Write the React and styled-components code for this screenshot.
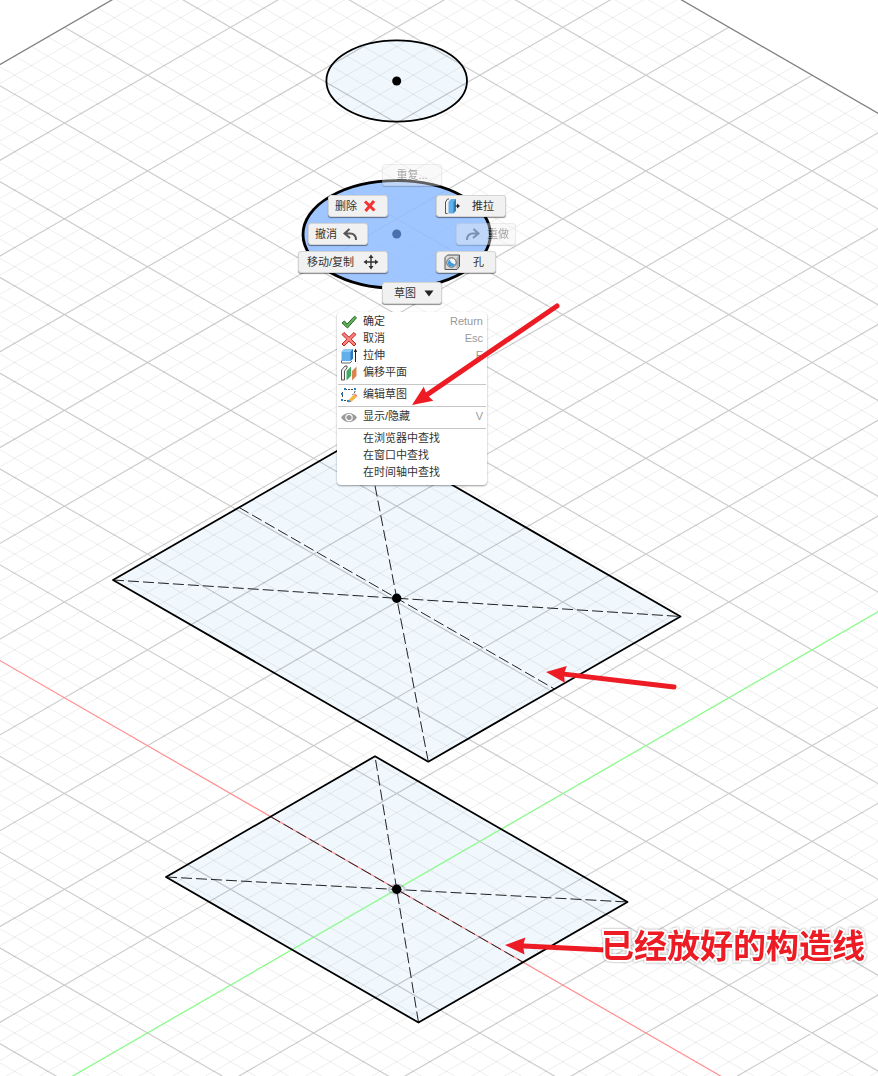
import React from 'react';
import styled, { createGlobalStyle } from 'styled-components';

const GlobalStyle = createGlobalStyle`
  * { box-sizing: border-box; }
  body {
    margin: 0;
    background: #fff;
    font-family: "Liberation Sans", "Noto Sans CJK SC", sans-serif;
    font-size: 11px;
    color: #333;
  }
  button { font: inherit; color: inherit; cursor: pointer; }
`;

const Workspace = styled.main`
  position: relative;
  width: 100%;
  height: 100vh;
  min-height: 560px;
  overflow: hidden;
`;

const Viewport = styled.svg`
  display: block;
  width: 100%;
  height: 100%;
`;

const Markup = styled(Viewport)`
  position: absolute;
  inset: 0;
  pointer-events: none;
`;

const buttonPadding = {
  trailingIcon: '0 9px 0 6px',
  leadingIcon: '0 11px 0 7px',
  wide: '0 8px',
  redo: '0 6px 0 8px',
  caret: '0 7px 0 11px',
  plain: '0',
};

const RadialButton = styled.button`
  position: absolute;
  left: ${(p) => p.$x}px;
  top: ${(p) => p.$y}px;
  width: ${(p) => p.$w || 60}px;
  height: 22px;
  padding: ${(p) => buttonPadding[p.$kind]};
  display: flex;
  align-items: center;
  justify-content: ${(p) => (p.$kind === 'plain' ? 'center' : 'space-between')};
  background: #f1f1f1;
  border: 1px solid #d4d4d4;
  border-radius: 3px;
  box-shadow: 0 1px 1px rgba(0, 0, 0, 0.45);
  line-height: 16px;
  white-space: nowrap;
  &:disabled {
    color: #222;
    opacity: 0.4;
    cursor: default;
  }
`;

const ContextMenu = styled.ul`
  position: absolute;
  left: 337px;
  top: 312px;
  width: 150px;
  margin: 0;
  padding: 1px 0 4px;
  list-style: none;
  background: #fff;
  border-radius: 4px;
  box-shadow: 0 1px 2px rgba(0, 0, 0, 0.4);
`;

const MenuButton = styled.button`
  display: grid;
  grid-template-columns: 18px 1fr auto;
  column-gap: 4px;
  align-items: center;
  width: 100%;
  height: 17px;
  padding: 0 4px;
  border: 0;
  background: none;
  text-align: left;
  line-height: 17px;
  white-space: nowrap;
`;

const Shortcut = styled.span`
  color: #999;
`;

const Separator = styled.li`
  height: 5px;
  padding-top: 3px;
  &::before {
    content: "";
    display: block;
    height: 1px;
    margin: 0 1px;
    background: #c6c6c6;
  }
`;

const Callout = styled.p`
  position: absolute;
  left: 601px;
  top: 920px;
  margin: 0;
  font-family: "Noto Sans CJK SC", sans-serif;
  font-size: 33px;
  font-weight: 700;
  line-height: 48px;
  white-space: nowrap;
  color: #ed1c24;
  -webkit-text-stroke: 4px #fff;
  paint-order: stroke fill;
  filter: drop-shadow(0 0 1px rgba(0, 0, 0, 0.4));
`;

const IconSvg = styled.svg`
  display: block;
  flex: none;
  overflow: visible;
`;

const Icon = ({ children, w = 16 }) => (
  <IconSvg width={w} height="16" viewBox={`0 0 ${w} 16`} fill="none" aria-hidden="true">
    {children}
  </IconSvg>
);

const icons = {
  delete: (
    <Icon>
      <path d="M3 3.500 L12.500 12.500 M12 3 L3.500 13" stroke="#f23232" strokeWidth="3" />
    </Icon>
  ),
  undo: (
    <Icon>
      <path d="M7.500 3 L2.500 7.500 L8 12 M3.500 7.500 H8 C12 7.500 14 10 14 14" stroke="#555" strokeWidth="2" />
    </Icon>
  ),
  redo: (
    <Icon>
      <path d="M8.500 3 L13.500 7.500 L8 12 M12.500 7.500 H8 C4 7.500 2 10 2 14" stroke="#444" strokeWidth="2" />
    </Icon>
  ),
  move: (
    <Icon>
      <path d="M8 2 V14 M2 8 H14" stroke="#333" strokeWidth="1.4" />
      <path d="M8 0.500 L10.500 4 H5.500 Z M8 15.500 L5.500 12 H10.500 Z M0.500 8 L4 5.500 V10.500 Z M15.500 8 L12 10.500 V5.500 Z" fill="#333" />
    </Icon>
  ),
  caret: (
    <Icon w={10}>
      <path d="M0.500 5.500 H9.500 L5 11.500 Z" fill="#222" />
    </Icon>
  ),
  press: (
    <Icon>
      <path d="M5 1 H3.500 L1.500 4 V15.500 H3.500" stroke="#555" />
      <path d="M4.500 4 L7 1 H12 V12.500 L9.500 15.500 H4.500 Z" fill="#62b0ea" />
      <path d="M9.500 4 L12 1 V12.500 L9.500 15.500 Z" fill="#2c7cb8" />
      <path d="M11.500 8 H14.500" stroke="#222" strokeWidth="1.200" />
      <path d="M13 5.500 L16 8 L13 10.500 Z" fill="#222" />
    </Icon>
  ),
  hole: (
    <Icon>
      <path d="M1 3.500 L3.500 1 H15.500 V12.500 L13 15.500 H1 Z" fill="#d9d9d9" stroke="#555" />
      <path d="M12.500 4 L15 1.500 V12.500 L12.500 15 Z" fill="#aaa" />
      <circle cx="7.500" cy="8.500" r="4.700" fill="#f7f7f7" stroke="#555" />
      <path d="M6 5.500 A4.500 4.500 0 0 0 11 10 A3.700 3.700 0 1 1 6 5.500 Z" fill="#3f9be0" />
    </Icon>
  ),
  check: (
    <Icon>
      <path d="M1 9 L3.500 7 L6 10.200 L13.500 2.200 L15.500 3.800 L6.500 14 Z" fill="#65b05a" stroke="#236b27" />
    </Icon>
  ),
  cancel: (
    <Icon>
      <path d="M3 1.500 L8 6.200 L13 1.500 L15 3.500 L10.200 8.200 L15 13 L13 15 L8 10.200 L3 15 L1 13 L5.800 8.200 L1 3.500 Z" fill="#f4847c" stroke="#c5221f" />
    </Icon>
  ),
  extrude: (
    <Icon>
      <path d="M0.500 12.500 V15 H9 L11 13" stroke="#666" />
      <path d="M0.500 4 L3 1 H12 V10.500 L9.500 13 H0.500 Z" fill="#62aeea" />
      <path d="M0.500 4 L3 1 H12 L9.500 4 Z" fill="#8bc8f5" />
      <path d="M9.500 4 L12 1 V10.500 L9.500 13 Z" fill="#2c78b8" />
      <path d="M14.500 14 V3" stroke="#222" />
      <path d="M14.500 0.500 L16.200 4 H12.800 Z" fill="#222" />
    </Icon>
  ),
  offset: (
    <Icon>
      <path d="M0.500 15 V5 L4 1 H6 V3 L3.500 6 V15 Z" fill="#f2f2f2" stroke="#555" />
      <path d="M5.500 6 L10 1.500 V11 L5.500 15.500 Z" fill="#41ab65" />
      <path d="M11 6 L15.500 1.500 V11 L11 15.500 Z" fill="#d98652" />
    </Icon>
  ),
  sketch: (
    <Icon>
      <path d="M4 2.500 H12 M1.500 5 V11 M3 13.500 H7 M14 4 C14 6 12 7 11.500 8" stroke="#444" strokeDasharray="2 1" />
      <path d="M3 1 h2 v2 h-2 Z M13 1 h2 v2 h-2 Z M0 6 h2 v2 h-2 Z M0 12 h2 v2 h-2 Z M6 13 h2 v2 h-2 Z" fill="#1687d9" />
      <path d="M8 12.500 L13 7.500 L15.500 10 L10.500 14.800 Z" fill="#f6b73c" />
      <path d="M13 7.500 L14 6.500 L16.500 9 L15.500 10 Z" fill="#ea7b83" />
      <path d="M8 12.500 L7.500 15.500 L10.500 14.800 Z" fill="#888" />
    </Icon>
  ),
  eye: (
    <Icon>
      <path d="M0 8.500 C4 2.500 12 2.500 16 8.500 C12 14.500 4 14.500 0 8.500 Z" fill="#999" />
      <circle cx="8" cy="8.500" r="3.200" stroke="#fff" strokeWidth="1.200" />
    </Icon>
  ),
};

const radialItems = [
  { label: '重复...', x: 382, y: 164, kind: 'plain', disabled: true },
  { label: '删除', x: 328, y: 195, kind: 'trailingIcon', icon: 'delete' },
  { label: '推拉', x: 436, y: 195, w: 70, kind: 'leadingIcon', icon: 'press' },
  { label: '撤消', x: 308, y: 223, kind: 'trailingIcon', icon: 'undo' },
  { label: '重做', x: 456, y: 223, kind: 'redo', icon: 'redo', disabled: true },
  { label: '移动/复制', x: 298, y: 251, w: 90, kind: 'wide', icon: 'move' },
  { label: '孔', x: 436, y: 251, kind: 'leadingIcon', icon: 'hole' },
  { label: '草图', x: 382, y: 282, kind: 'caret', icon: 'caret' },
];

const menuItems = [
  { label: '确定', icon: 'check', shortcut: 'Return' },
  { label: '取消', icon: 'cancel', shortcut: 'Esc' },
  { label: '拉伸', icon: 'extrude', shortcut: 'E' },
  { label: '偏移平面', icon: 'offset' },
  null,
  { label: '编辑草图', icon: 'sketch' },
  null,
  { label: '显示/隐藏', icon: 'eye', shortcut: 'V' },
  null,
  { label: '在浏览器中查找' },
  { label: '在窗口中查找' },
  { label: '在时间轴中查找' },
];

// Isometric ground plane: (i, j) grid units projected from the sketch origin.
const ORIGIN = [396.7, 889.3];
const STEP = [83.07, 47.89];
const EXTENT = 11;
const DIVISIONS = 5;

const project = (i, j) =>
  `${(ORIGIN[0] + (i + j) * STEP[0]).toFixed(2)} ${(ORIGIN[1] + (i - j) * STEP[1]).toFixed(2)}`;

const gridPath = (keep) => {
  let d = '';
  for (let k = -EXTENT * DIVISIONS; k <= EXTENT * DIVISIONS; k += 1) {
    if (keep(k)) {
      const t = k / DIVISIONS;
      d += `M${project(t, -EXTENT)}L${project(t, EXTENT)}M${project(-EXTENT, t)}L${project(EXTENT, t)}`;
    }
  }
  return d;
};

const edge = EXTENT * DIVISIONS;
const minorGrid = gridPath((k) => k % DIVISIONS !== 0);
const majorGrid = gridPath((k) => k !== 0 && k % DIVISIONS === 0 && Math.abs(k) !== edge);
const borderGrid = gridPath((k) => Math.abs(k) === edge);

const upperPlate = 'M113 580 L365.200 434.800 L680.500 616.500 L428.300 761.700 Z';
const lowerPlate = 'M166 877 L375 756.300 L627.500 902 L418.500 1022.500 Z';

const Arrow = ({ from, to }) => {
  const dx = from[0] - to[0];
  const dy = from[1] - to[1];
  const length = Math.hypot(dx, dy);
  const angle = (Math.atan2(dy, dx) * 180) / Math.PI;
  return (
    <g transform={`translate(${to[0]} ${to[1]}) rotate(${angle})`} fill="#ed1c24">
      <path d="M0 0 L20 -8.500 L18 0 L20 8.500 Z" />
      <path d={`M14 0 H${length}`} stroke="#ed1c24" strokeWidth="5" strokeLinecap="round" />
    </g>
  );
};

const Scene = () => (
  <Viewport role="img" aria-label="草图">
    <g fill="#f0f8fe">
      <path d={upperPlate} />
      <path d={lowerPlate} />
      <ellipse cx="396.700" cy="81" rx="70.300" ry="40.600" />
    </g>
    <g fill="none">
      <path d={minorGrid} stroke="#000" strokeOpacity="0.07" />
      <path d={majorGrid} stroke="#000" strokeOpacity="0.2" strokeWidth="1.200" />
      <path d={borderGrid} stroke="#808080" strokeWidth="1.300" />
      <path d={`M${project(-EXTENT, 0)}L${project(EXTENT, 0)}`} stroke="#ff8f8f" strokeWidth="1.200" />
      <path d={`M${project(0, -EXTENT)}L${project(0, EXTENT)}`} stroke="#8bfa8b" strokeWidth="1.300" />
      <ellipse cx="396.700" cy="889.300" rx="8" ry="4.500" stroke="#777" strokeOpacity="0.35" strokeWidth="2" />
    </g>
    <g fill="none" stroke="#222" strokeWidth="1" strokeDasharray="11 4">
      <path d="M113 580 L680.500 616.500" />
      <path d="M428.300 761.700 L365.200 434.800" />
      <path d="M239 507.400 L554.500 689" />
      <path d="M166 877 L627.500 902" />
      <path d="M418.500 1022.500 L375 756.300" />
      <path d="M270.500 816.600 L523 962.200" />
    </g>
    <g fill="none" stroke="#000" strokeWidth="1.800" strokeLinejoin="round">
      <path d={upperPlate} />
      <path d={lowerPlate} />
      <ellipse cx="396.700" cy="81" rx="70.300" ry="40.600" />
    </g>
    <ellipse cx="396.700" cy="234.400" rx="93.700" ry="53.800" fill="#8fbcff" fillOpacity="0.85" stroke="#000" strokeWidth="2.800" />
    <circle cx="396.700" cy="234" r="4.500" fill="#4a70ae" />
    <g fill="#000">
      <circle cx="396.700" cy="81" r="4.500" />
      <circle cx="396.700" cy="598.200" r="4.700" />
      <circle cx="396.700" cy="889.300" r="4.700" />
    </g>
  </Viewport>
);

const iconLeads = (kind) => kind === 'leadingIcon' || kind === 'redo';

const RadialItem = ({ item }) => (
  <RadialButton
    type="button"
    disabled={item.disabled}
    $x={item.x}
    $y={item.y}
    $w={item.w}
    $kind={item.kind}
  >
    {iconLeads(item.kind) && icons[item.icon]}
    <span>{item.label}</span>
    {!iconLeads(item.kind) && item.icon && icons[item.icon]}
  </RadialButton>
);

export default function App() {
  return (
    <>
      <GlobalStyle />
      <Workspace>
        <Scene />
        <nav aria-label="标记菜单">
          {radialItems.map((item) => (
            <RadialItem key={item.label} item={item} />
          ))}
        </nav>
        <ContextMenu>
          {menuItems.map((item, index) =>
            item ? (
              <li key={item.label}>
                <MenuButton type="button">
                  <span>{item.icon && icons[item.icon]}</span>
                  <span>{item.label}</span>
                  {item.shortcut && <Shortcut>{item.shortcut}</Shortcut>}
                </MenuButton>
              </li>
            ) : (
              <Separator key={index} role="separator" />
            )
          )}
        </ContextMenu>
        <Markup aria-hidden="true">
          <Arrow from={[557, 306]} to={[412, 405]} />
          <Arrow from={[674, 687]} to={[546, 672]} />
          <Arrow from={[606, 950]} to={[505, 945]} />
        </Markup>
        <Callout>已经放好的构造线</Callout>
      </Workspace>
    </>
  );
}
